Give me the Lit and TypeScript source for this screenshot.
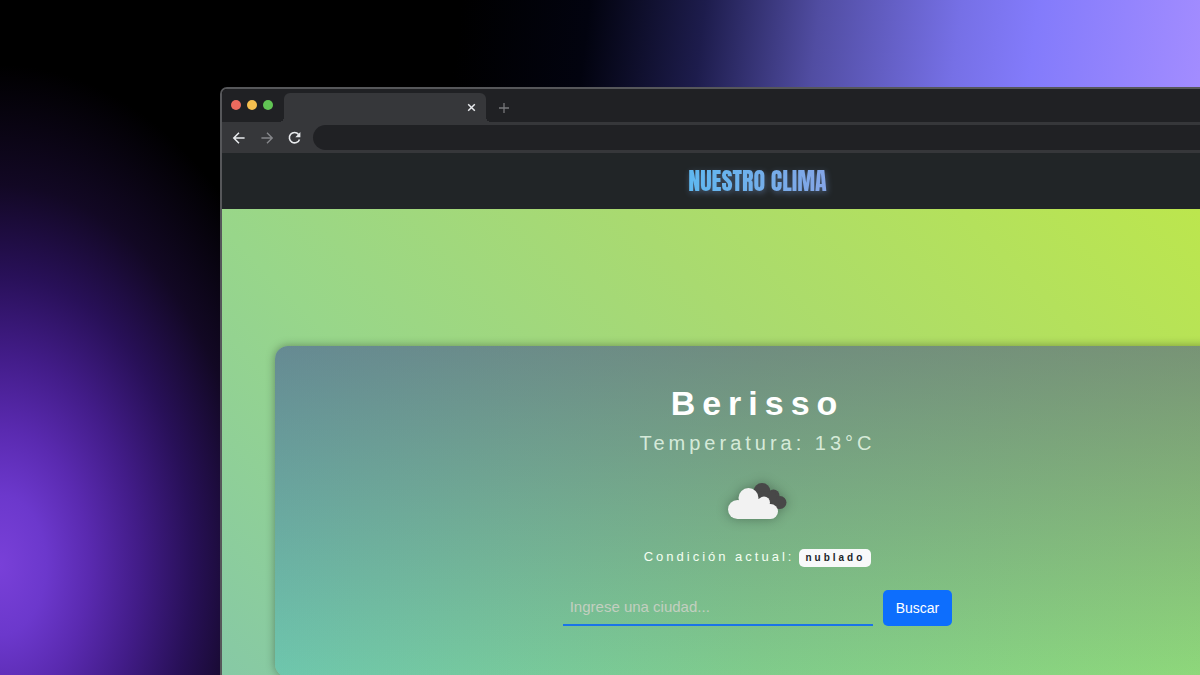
import { LitElement, html, css, svg } from "lit";
import { customElement, property } from "lit/decorators.js";

@customElement("browser-chrome")
class BrowserChrome extends LitElement {
  static styles = css`
    :host { display: block; }
    button {
      display: grid;
      place-items: center;
      padding: 0;
      border: 0;
      background: none;
      color: #e8eaed;
    }
    svg { display: block; fill: none; stroke: currentColor; }
    .strip {
      display: flex;
      height: 33px;
      background: #202124;
    }
    .lights {
      display: flex;
      align-items: center;
      gap: 6px;
      padding: 0 11px 1px 9px;
    }
    .light { width: 10px; height: 10px; border-radius: 50%; }
    .red { background: #ed6a5e; }
    .yellow { background: #f5bf4f; }
    .green { background: #61c554; }
    .tab {
      position: relative;
      display: flex;
      align-items: center;
      justify-content: flex-end;
      width: 202px;
      margin-top: 4px;
      padding-right: 9px;
      box-sizing: border-box;
      border-radius: 6px 6px 0 0;
      background: #36373a;
    }
    .tab::before,
    .tab::after {
      content: "";
      position: absolute;
      bottom: 0;
      width: 5px;
      height: 5px;
    }
    .tab::before {
      right: 100%;
      background: radial-gradient(circle at 0 0, transparent 5px, #36373a 5px);
    }
    .tab::after {
      left: 100%;
      background: radial-gradient(circle at 100% 0, transparent 5px, #36373a 5px);
    }
    .new { width: 36px; padding-top: 4px; color: #77787b; }
    .bar {
      display: flex;
      align-items: center;
      height: 31px;
      box-sizing: border-box;
      background: #36373a;
    }
    .bar button { width: 28px; height: 28px; }
    .bar .dim { color: #85868a; }
    .nav { display: flex; padding: 0 4px 0 3px; }
    .address {
      flex: 1;
      height: 25px;
      margin-right: 8px;
      padding: 0 14px;
      box-sizing: border-box;
      border: 0;
      border-radius: 13px;
      background: #202124;
      color: #e8eaed;
    }
  `;
  render() {
    return html`
      <div class="strip">
        <div class="lights">
          <span class="light red"></span><span class="light yellow"></span><span class="light green"></span>
        </div>
        <div class="tab">
          <button aria-label="Cerrar pestaña">
            <svg width="11" height="11" viewBox="0 0 11 11" stroke-width="1.5"><path d="M2.2 2.2l6.6 6.6M8.8 2.2L2.2 8.8" /></svg>
          </button>
        </div>
        <button class="new" aria-label="Nueva pestaña">
          <svg width="12" height="12" viewBox="0 0 12 12" stroke-width="1.3"><path d="M6 1v10M1 6h10" /></svg>
        </button>
      </div>
      <div class="bar">
        <div class="nav">
          <button aria-label="Atrás">
            <svg width="14" height="14" viewBox="0 0 14 14" stroke-width="1.5"><path d="M12.6 7H2M7 1.8L1.8 7L7 12.2" /></svg>
          </button>
          <button class="dim" aria-label="Adelante">
            <svg width="14" height="14" viewBox="0 0 14 14" stroke-width="1.4"><path d="M1.4 7H12M7 1.8L12.2 7L7 12.2" /></svg>
          </button>
          <button aria-label="Recargar">
            <svg width="14" height="14" viewBox="0 0 14 14" stroke-width="1.6">
              <path d="M10.6 3.4A5.2 5.2 0 1 0 11.5 8.4" />
              <path d="M12.4 1v5.2H7.3z" fill="currentColor" stroke="none" />
            </svg>
          </button>
        </div>
        <input class="address" type="text" aria-label="Dirección" />
      </div>
    `;
  }
}

@customElement("weather-card")
class WeatherCard extends LitElement {
  @property() city = "";
  @property({ type: Number }) temperature = 0;
  @property() condition = "";

  static styles = css`
    :host {
      display: flex;
      flex-direction: column;
      align-items: center;
      padding: 37px 24px 51px;
      border-radius: 13px;
      color: #fff;
      background:
        linear-gradient(to bottom, rgba(91, 58, 112, 0.43), rgba(91, 58, 112, 0)),
        linear-gradient(to right, #6ec7ad, #80cc8b 50%, #8fd979);
      box-shadow: 0 0 10px rgba(0, 0, 0, 0.35);
    }
    h1, p { margin: 0; }
    h1 { font-size: 34px; line-height: 40px; letter-spacing: 7px; }
    .temp {
      font-size: 20px;
      line-height: 40px;
      letter-spacing: 4px;
      color: rgba(240, 255, 240, 0.8);
    }
    .icon {
      display: block;
      margin: 20px 0 28px;
      filter: drop-shadow(0 0 6px rgba(0, 0, 0, 0.3));
    }
    .state {
      display: flex;
      align-items: center;
      gap: 5px;
      font-size: 13px;
      line-height: 20px;
      letter-spacing: 3px;
      color: #f4fff2;
    }
    .badge {
      margin-top: 2px;
      padding: 0 6px;
      border-radius: 5px;
      background: #f8f9fa;
      color: #212529;
      font-size: 10px;
      font-weight: 700;
      line-height: 18px;
    }
    form { display: flex; gap: 10px; margin-top: 23px; }
    input {
      width: 310px;
      height: 36px;
      box-sizing: border-box;
      padding: 0 7px 2px;
      border: 0;
      border-bottom: 2px solid #1b74e8;
      background: none;
      color: #fff;
      font: 15px/20px "Liberation Sans", Arial, sans-serif;
      outline: 0;
    }
    input::placeholder { color: #c3cfc0; opacity: 1; }
    button {
      padding: 0 13px;
      border: 0;
      border-radius: 5px;
      background: #0d6efd;
      color: #fff;
      font: 14px/20px "Liberation Sans", Arial, sans-serif;
    }
  `;

  private clouds = svg`
    <g fill="#484848">
      <circle cx="34" cy="8.5" r="8.5" />
      <circle cx="45.5" cy="12.5" r="6" />
      <circle cx="52" cy="19.5" r="6.5" />
      <path d="M30 9L47 8L52 26H36z" />
    </g>
    <g fill="#f2f2f2">
      <circle cx="9.5" cy="26.5" r="9.5" />
      <circle cx="20.5" cy="15" r="10" />
      <circle cx="36" cy="19.5" r="6" />
      <circle cx="42.5" cy="28.5" r="7.5" />
      <path d="M9.5 36V18L14 16H36L42.5 22V36z" />
    </g>
  `;

  render() {
    return html`
      <h1>${this.city}</h1>
      <p class="temp">Temperatura: ${this.temperature}°C</p>
      <svg class="icon" width="59" height="36" viewBox="0 0 59 36" role="img" aria-label=${this.condition}>${this.clouds}</svg>
      <p class="state"><span>Condición actual:</span><span class="badge">${this.condition}</span></p>
      <form @submit=${(e: Event) => e.preventDefault()}>
        <input type="text" placeholder="Ingrese una ciudad..." aria-label="Ciudad" />
        <button type="submit">Buscar</button>
      </form>
    `;
  }
}

@customElement("app-root")
class AppRoot extends LitElement {
  static styles = css`
    :host {
      display: block;
      height: 100vh;
      overflow: hidden;
      box-sizing: border-box;
      padding: 87px 0 0 220px;
      font-family: "Liberation Sans", Arial, sans-serif;
      background:
        radial-gradient(330px 500px at 0 565px, #7940d8 0%, #6c38cc 14%, #5a2ab0 27%, #421c88 42%, #281058 58%, #120824 76%, rgba(0, 0, 0, 0) 100%),
        linear-gradient(97deg, #000 36%, #02030f 46%, #1d1c4c 55%, #514da2 64%, #7670e6 75%, #837bfb 81%, #a48dff 95%);
      background-color: #000;
    }
    .window {
      display: flex;
      flex-direction: column;
      min-height: 100%;
      margin-right: -95px;
      border: 2px solid #56575a;
      border-radius: 7px 7px 0 0;
      overflow: hidden;
      box-sizing: border-box;
    }
    header {
      display: grid;
      place-items: center;
      height: 56px;
      background: #212527;
    }
    .brand {
      font: 400 24px/32px Anton, "Liberation Sans Narrow", "Liberation Sans", sans-serif;
      text-decoration: none;
      color: transparent;
      background: linear-gradient(to right, #5fb8f0, #84a5e6);
      -webkit-background-clip: text;
      background-clip: text;
      filter: drop-shadow(1px 2px 3px rgba(130, 170, 230, 0.4));
    }
    main {
      flex: 1;
      padding: 137px 53px 60px;
      background: linear-gradient(45deg, #84c7a9, #98d68a 32%, #a9da70 58%, #bfe848);
    }
  `;
  render() {
    return html`
      <div class="window">
        <browser-chrome></browser-chrome>
        <header><a class="brand" href="#">NUESTRO CLIMA</a></header>
        <main>
          <weather-card city="Berisso" temperature="13" condition="nublado"></weather-card>
        </main>
      </div>
    `;
  }
}
